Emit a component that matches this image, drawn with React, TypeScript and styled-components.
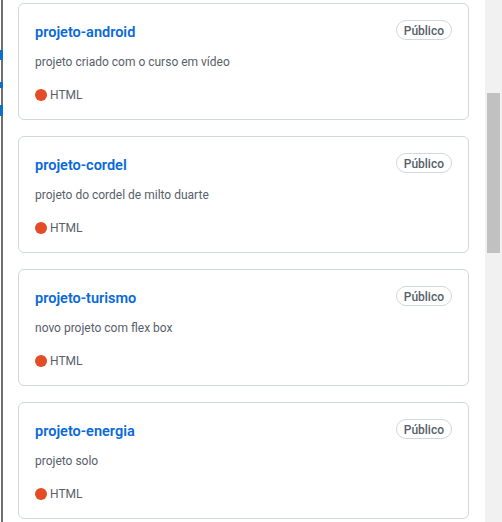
import React from 'react'
import styled, { createGlobalStyle } from 'styled-components'

const Global = createGlobalStyle`
  html, body {
    margin: 0;
    padding: 0;
    background: #ffffff;
    overflow: hidden;
  }
  body {
    font-family: Roboto, "Noto Sans", "Liberation Sans", sans-serif;
  }
`;

const Page = styled.div`
  display: flex;
  width: 502px;
  height: 522px;
  overflow: hidden;
`;

const Rail = styled.div`
  width: 18px;
  flex-shrink: 0;
  display: flex;
  flex-direction: column;
  align-items: flex-start;
`;

const RailBit = styled.div<{ $h: number; $blue?: boolean }>`
  width: ${p => (p.$blue ? 3 : 2)}px;
  margin-left: ${p => (p.$blue ? 0 : 1)}px;
  height: ${p => p.$h}px;
  background: ${p => (p.$blue ? '#0f6fc6' : '#707070')};
  flex-shrink: 0;
`;

const List = styled.div`
  width: 451px;
  flex-shrink: 0;
  display: flex;
  flex-direction: column;
  gap: 16px;
  padding-top: 3px;
`;

const Card = styled.div`
  box-sizing: border-box;
  border: 1px solid #d0d7de;
  border-radius: 6px;
  padding: 17px 16px 15px;
  height: 117px;
  display: flex;
  flex-direction: column;
`;

const Head = styled.div`
  display: flex;
  align-items: flex-start;
  justify-content: space-between;
  height: 20px;
`;

const RepoName = styled.a`
  color: #0969da;
  font-size: 14.5px;
  line-height: 20px;
  font-weight: 600;
  text-decoration: none;
  padding-top: 2px;
`;

const Badge = styled.span`
  box-sizing: border-box;
  height: 20px;
  margin-top: -1px;
  padding: 1px 7px 0;
  border: 1px solid #d0d7de;
  border-radius: 2em;
  font-size: 12px;
  font-weight: 500;
  color: #57606a;
  display: inline-flex;
  align-items: center;
`;

const Desc = styled.p`
  margin: 12px 0 0;
  font-size: 12px;
  line-height: 18px;
  color: #57606a;
`;

const Lang = styled.div`
  margin-top: 15px;
  display: flex;
  align-items: center;
  gap: 3px;
  font-size: 12px;
  line-height: 18px;
  color: #57606a;
`;

const Dot = styled.span<{ $color: string }>`
  width: 12px;
  height: 12px;
  border-radius: 50%;
  background: ${p => p.$color};
`;

const Gutter = styled.div`
  flex: 1;
`;

const Track = styled.div`
  width: 17px;
  flex-shrink: 0;
  background: #f1f1f1;
  padding-top: 93px;
  box-sizing: border-box;
  display: flex;
  justify-content: center;
`;

const Thumb = styled.div`
  width: 13px;
  height: 160px;
  background: #c1c1c1;
`;

const repos = [
  { name: 'projeto-android', desc: 'projeto criado com o curso em vídeo' },
  { name: 'projeto-cordel', desc: 'projeto do cordel de milto duarte' },
  { name: 'projeto-turismo', desc: 'novo projeto com flex box' },
  { name: 'projeto-energia', desc: 'projeto solo' },
];

const railBits = [
  { h: 50 }, { h: 10, blue: true }, { h: 22 }, { h: 6, blue: true },
  { h: 17 }, { h: 11, blue: true }, { h: 406 },
];

export default function App() {
  return (
    <Page>
      <Global />
      <Rail>
        {railBits.map((b, i) => (
          <RailBit key={i} $h={b.h} $blue={b.blue} />
        ))}
      </Rail>
      <List>
        {repos.map(r => (
          <Card key={r.name}>
            <Head>
              <RepoName href="#">{r.name}</RepoName>
              <Badge>Público</Badge>
            </Head>
            <Desc>{r.desc}</Desc>
            <Lang>
              <Dot $color="#e34c26" />
              HTML
            </Lang>
          </Card>
        ))}
      </List>
      <Gutter />
      <Track>
        <Thumb />
      </Track>
    </Page>
  );
}
